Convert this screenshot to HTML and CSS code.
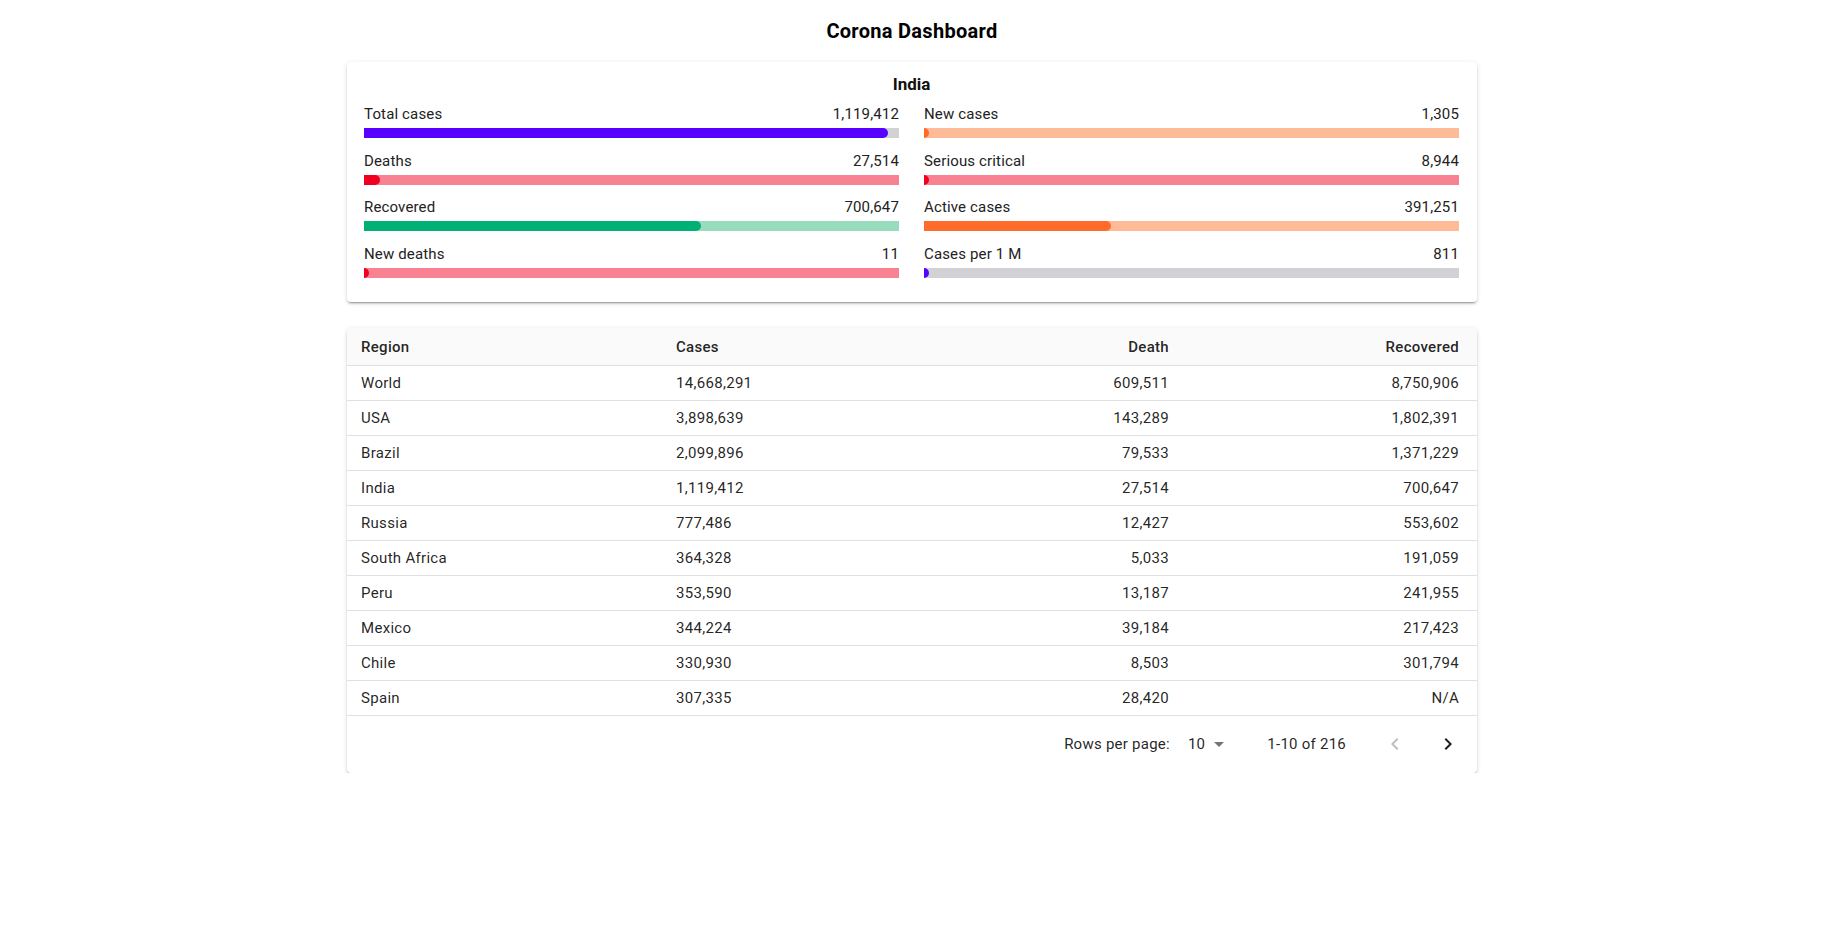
FILE: index.html
```html
<!DOCTYPE html>
<html lang="en">
<head>
<meta charset="utf-8">
<title>Corona Dashboard</title>
<link rel="stylesheet" href="styles.css">
</head>
<body>
<div class="page">
  <h1 class="title">Corona Dashboard</h1>

  <section class="card stats-card">
    <h2 class="country">India</h2>
    <div class="stats">
      <div class="stat">
        <div class="stat-head"><span>Total cases</span><span>1,119,412</span></div>
        <div class="bar track-gray"><div class="fill fill-blue" style="width:98%"></div></div>
      </div>
      <div class="stat">
        <div class="stat-head"><span>New cases</span><span>1,305</span></div>
        <div class="bar track-peach"><div class="fill fill-orange" style="width:1%"></div></div>
      </div>
      <div class="stat">
        <div class="stat-head"><span>Deaths</span><span>27,514</span></div>
        <div class="bar track-pink"><div class="fill fill-red" style="width:3%"></div></div>
      </div>
      <div class="stat">
        <div class="stat-head"><span>Serious critical</span><span>8,944</span></div>
        <div class="bar track-pink"><div class="fill fill-red" style="width:1%"></div></div>
      </div>
      <div class="stat">
        <div class="stat-head"><span>Recovered</span><span>700,647</span></div>
        <div class="bar track-green"><div class="fill fill-green" style="width:63%"></div></div>
      </div>
      <div class="stat">
        <div class="stat-head"><span>Active cases</span><span>391,251</span></div>
        <div class="bar track-peach"><div class="fill fill-orange" style="width:35%"></div></div>
      </div>
      <div class="stat">
        <div class="stat-head"><span>New deaths</span><span>11</span></div>
        <div class="bar track-pink"><div class="fill fill-red" style="width:1%"></div></div>
      </div>
      <div class="stat">
        <div class="stat-head"><span>Cases per 1 M</span><span>811</span></div>
        <div class="bar track-gray"><div class="fill fill-blue" style="width:1%"></div></div>
      </div>
    </div>
  </section>

  <section class="card table-card">
    <table class="data-table">
      <colgroup>
        <col class="col-region">
        <col class="col-cases">
        <col class="col-death">
        <col class="col-recovered">
      </colgroup>
      <thead>
        <tr><th>Region</th><th>Cases</th><th class="num">Death</th><th class="num">Recovered</th></tr>
      </thead>
      <tbody>
        <tr><td>World</td><td>14,668,291</td><td class="num">609,511</td><td class="num">8,750,906</td></tr>
        <tr><td>USA</td><td>3,898,639</td><td class="num">143,289</td><td class="num">1,802,391</td></tr>
        <tr><td>Brazil</td><td>2,099,896</td><td class="num">79,533</td><td class="num">1,371,229</td></tr>
        <tr><td>India</td><td>1,119,412</td><td class="num">27,514</td><td class="num">700,647</td></tr>
        <tr><td>Russia</td><td>777,486</td><td class="num">12,427</td><td class="num">553,602</td></tr>
        <tr><td>South Africa</td><td>364,328</td><td class="num">5,033</td><td class="num">191,059</td></tr>
        <tr><td>Peru</td><td>353,590</td><td class="num">13,187</td><td class="num">241,955</td></tr>
        <tr><td>Mexico</td><td>344,224</td><td class="num">39,184</td><td class="num">217,423</td></tr>
        <tr><td>Chile</td><td>330,930</td><td class="num">8,503</td><td class="num">301,794</td></tr>
        <tr><td>Spain</td><td>307,335</td><td class="num">28,420</td><td class="num">N/A</td></tr>
      </tbody>
    </table>
    <div class="pagination">
      <span class="rows-label">Rows per page:</span>
      <span class="rows-select">
        <span class="rows-value">10</span>
        <svg class="drop-icon" viewBox="0 0 24 24" width="24" height="24"><path d="M7 10l5 5 5-5z"/></svg>
      </span>
      <span class="range">1-10 of 216</span>
      <span class="actions">
        <svg class="nav-icon disabled" viewBox="0 0 24 24" width="24" height="24"><path d="M15.41 7.41L14 6l-6 6 6 6 1.41-1.41L10.83 12z"/></svg>
        <svg class="nav-icon" viewBox="0 0 24 24" width="24" height="24"><path d="M10 6L8.59 7.41 13.17 12l-4.58 4.59L10 18l6-6z"/></svg>
      </span>
    </div>
  </section>
</div>
</body>
</html>
```

FILE: styles.css
```css
* { box-sizing: border-box; }

body {
  margin: 0;
  background: #ffffff;
  font-family: Roboto, "Liberation Sans", Arial, sans-serif;
  color: rgba(0, 0, 0, 0.87);
}

.page {
  padding-top: 15px;
}

.title {
  margin: 0 0 15px;
  font-size: 20px;
  line-height: 32px;
  font-weight: 700;
  letter-spacing: 0.3px;
  text-align: center;
  color: #000;
}

.card {
  width: 1130px;
  margin: 0 auto;
  background: #fff;
  border-radius: 4px;
  box-shadow: 0 3px 1px -2px rgba(0, 0, 0, 0.2), 0 2px 2px 0 rgba(0, 0, 0, 0.14), 0 1px 5px 0 rgba(0, 0, 0, 0.12);
}

.stats-card {
  padding: 10px 18px 24px 17px;
}

.country {
  margin: 0 0 7px;
  font-size: 17px;
  line-height: 24px;
  font-weight: 700;
  text-align: center;
  color: #111;
}

.stats {
  display: grid;
  grid-template-columns: 1fr 1fr;
  column-gap: 25px;
  row-gap: 11.5px;
}

.stat-head {
  display: flex;
  justify-content: space-between;
  font-size: 15px;
  line-height: 22px;
  letter-spacing: 0.15px;
  color: #222;
}

.bar {
  margin-top: 3px;
  height: 10px;
  overflow: hidden;
}

.fill {
  height: 100%;
  border-radius: 0 5px 5px 0;
}

.track-gray { background: #d1d1d6; }
.track-peach { background: #ffba98; }
.track-pink { background: #f98292; }
.track-green { background: #99dbbd; }

.fill-blue { background: #5700ff; }
.fill-orange { background: #ff6b2b; }
.fill-red { background: #ef0021; }
.fill-green { background: #00b074; }

.table-card {
  margin-top: 26px;
  overflow: hidden;
}

.data-table {
  width: 100%;
  border-collapse: collapse;
  table-layout: fixed;
  font-size: 15px;
  line-height: 22px;
  letter-spacing: 0.3px;
}

.col-region { width: 315px; }
.col-cases { width: 262px; }
.col-death { width: 263px; }
.col-recovered { width: 290px; }

.data-table th {
  padding: 8px 18px 7px 14px;
  background: #fafafa;
  font-weight: 500;
  text-align: left;
  border-bottom: 1px solid #e0e0e0;
  color: rgba(0, 0, 0, 0.87);
}

.data-table td {
  padding: 6px 18px 6px 14px;
  border-bottom: 1px solid #e0e0e0;
  color: rgba(0, 0, 0, 0.87);
}

.data-table .num { text-align: right; }

.pagination {
  height: 57px;
  display: flex;
  align-items: center;
  justify-content: flex-end;
  padding-right: 17px;
  font-size: 15px;
  letter-spacing: 0.25px;
  color: rgba(0, 0, 0, 0.87);
}

.rows-select {
  display: flex;
  align-items: center;
  margin-left: 18px;
}

.rows-value {
  margin-right: 2px;
}

.drop-icon { fill: rgba(0, 0, 0, 0.54); }

.range {
  margin-left: 36px;
}

.actions {
  display: flex;
  align-items: center;
  gap: 29px;
  margin-left: 37px;
}

.nav-icon { fill: #1e1e1e; }
.nav-icon.disabled { fill: rgba(0, 0, 0, 0.26); }
```
